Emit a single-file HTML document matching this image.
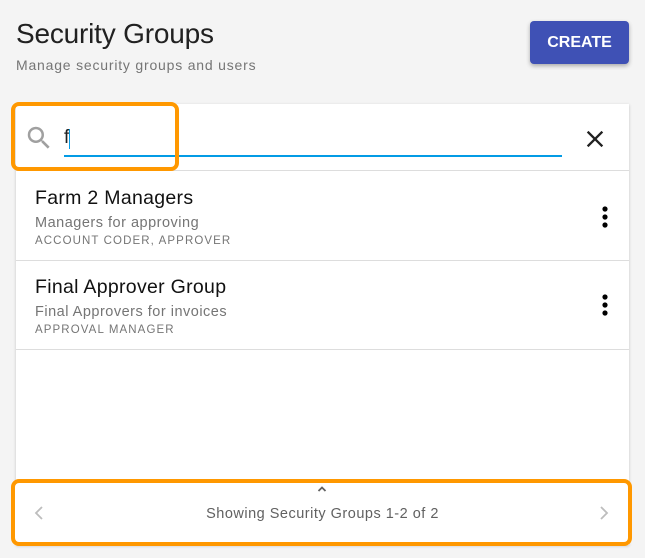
<!DOCTYPE html>
<html><head><meta charset="utf-8"><style>
*{margin:0;padding:0;box-sizing:border-box}
body{width:645px;height:558px;background:#f4f4f4;font-family:"Liberation Sans",sans-serif;position:relative;overflow:hidden}
.a{position:absolute}
</style></head><body>
<div class="a" style="left:16px;top:18px;font-size:28px;color:#212121;letter-spacing:-0.2px">Security Groups</div>
<div class="a" style="left:16px;top:57px;font-size:14px;color:#757575;letter-spacing:0.8px">Manage security groups and users</div>
<div class="a" style="left:530px;top:21px;width:99px;height:43px;background:#3f51b5;border-radius:4px;box-shadow:0 2px 4px rgba(0,0,0,.3);color:#fff;font-weight:bold;font-size:16px;text-align:center;line-height:44px">CREATE</div>

<div class="a" style="left:16px;top:104px;width:613px;height:441px;background:#fff;box-shadow:0 1px 3px rgba(0,0,0,.2)"></div>
<svg class="a" style="left:24px;top:123px" width="30" height="30" viewBox="0 0 24 24"><path d="M15.5 14h-.79l-.28-.27A6.47 6.47 0 0 0 16 9.5 6.5 6.5 0 1 0 9.5 16c1.61 0 3.09-.59 4.23-1.57l.27.28v.79l5 4.99L20.49 19l-4.99-5zm-6 0C7.01 14 5 11.99 5 9.5S7.01 5 9.5 5 14 7.01 14 9.5 11.99 14 9.5 14z" fill="#a0a0a0"/></svg>
<div class="a" style="left:64px;top:127px;font-size:19px;color:#212121">f</div>
<div class="a" style="left:69px;top:129px;width:1px;height:20px;background:#039be5"></div>
<div class="a" style="left:64px;top:155px;width:498px;height:2px;background:#039be5"></div>
<svg class="a" style="left:581px;top:125px" width="28" height="28" viewBox="0 0 24 24"><path d="M19 6.41 17.59 5 12 10.59 6.41 5 5 6.41 10.59 12 5 17.59 6.41 19 12 13.41 17.59 19 19 17.59 13.41 12z" fill="#212121"/></svg>
<div class="a" style="left:16px;top:170px;width:613px;height:1px;background:#ddd"></div>
<div class="a" style="left:11px;top:102px;width:168px;height:69px;border:4px solid #ff9800;border-radius:8px"></div>

<div class="a" style="left:35px;top:187px;font-size:19.5px;color:#111;letter-spacing:0.3px">Farm 2 Managers</div>
<div class="a" style="left:35px;top:215px;font-size:14.5px;color:#757575;letter-spacing:0.5px">Managers for approving</div>
<div class="a" style="left:35px;top:235px;font-size:11.5px;color:#757575;letter-spacing:1.1px">ACCOUNT CODER, APPROVER</div>
<svg class="a" style="left:596px;top:205px" width="18" height="24" viewBox="0 0 18 24"><circle cx="9" cy="4" r="2.6"/><circle cx="9" cy="12" r="2.6"/><circle cx="9" cy="20" r="2.6"/></svg>
<div class="a" style="left:16px;top:260px;width:613px;height:1px;background:#ddd"></div>

<div class="a" style="left:35px;top:276px;font-size:19.5px;color:#111;letter-spacing:0.3px">Final Approver Group</div>
<div class="a" style="left:35px;top:304px;font-size:14.5px;color:#757575;letter-spacing:0.5px">Final Approvers for invoices</div>
<div class="a" style="left:35px;top:324px;font-size:11.5px;color:#757575;letter-spacing:1.1px">APPROVAL MANAGER</div>
<svg class="a" style="left:596px;top:293px" width="18" height="24" viewBox="0 0 18 24"><circle cx="9" cy="4" r="2.6"/><circle cx="9" cy="12" r="2.6"/><circle cx="9" cy="20" r="2.6"/></svg>
<div class="a" style="left:16px;top:349px;width:613px;height:1px;background:#ddd"></div>

<div class="a" style="left:11px;top:479px;width:621px;height:67px;border:4px solid #ff9800;border-radius:8px;background:#fff"></div>
<svg class="a" style="left:316px;top:485px" width="12" height="8" viewBox="0 0 12 8"><path d="M2.5 6 6 2.5 9.5 6" stroke="#616161" stroke-width="1.8" fill="none"/></svg>
<svg class="a" style="left:33px;top:505px" width="12" height="16" viewBox="0 0 12 16"><path d="M9 2 3 8 9 14" stroke="#bdbdbd" stroke-width="1.8" fill="none"/></svg>
<svg class="a" style="left:598px;top:505px" width="12" height="16" viewBox="0 0 12 16"><path d="M3 2 9 8 3 14" stroke="#bdbdbd" stroke-width="1.8" fill="none"/></svg>
<div class="a" style="left:0;width:645px;top:506px;text-align:center;font-size:14.5px;color:#616161;letter-spacing:0.5px">Showing Security Groups 1-2 of 2</div>
</body></html>
